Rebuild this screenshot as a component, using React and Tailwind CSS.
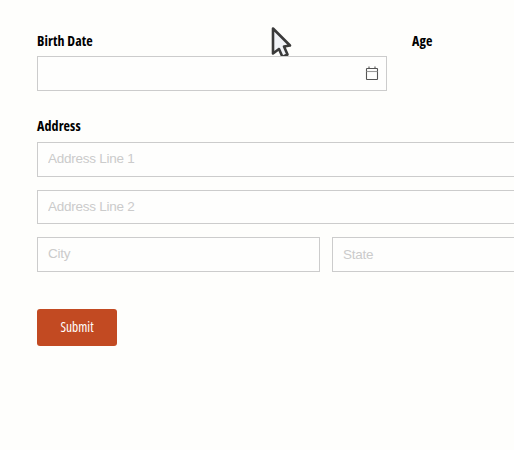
import React from "react";

const inputCls = "block w-full h-[35px] border border-[#cccccc] bg-[#fefefd] px-[10px] pb-[2px] text-[13.5px] tracking-[-0.25px] text-[#333] outline-none placeholder:text-[#cbcbcb] [font-family:'Liberation_Sans',sans-serif]";
const labelCls = "block text-[14px] leading-[19px] tracking-[0.1px] font-bold font-stretch-condensed text-black [font-family:'Open_Sans',sans-serif]";

function Cursor() {
  return (
    <svg className="absolute left-[270px] top-[26px]" width="22" height="33" viewBox="0 0 22 33" fill="none">
      <path d="M3 2.5 L20 19.5 L14 20.5 L17.5 28.5 L12.5 31 L9 23 L3 27.5 Z" fill="#f1f3f7" stroke="#3a3a3a" strokeWidth="2.6" strokeLinejoin="round" />
    </svg>
  );
}

function CalendarIcon() {
  return (
    <svg className="absolute right-[8px] top-[10px]" width="14" height="15" viewBox="0 0 14 15" fill="none" stroke="#555" strokeWidth="1.1">
      <rect x="1.5" y="2.5" width="11" height="11" rx="0.5" />
      <path d="M1.5 5.5 H12.5" stroke="#999" />
      <path d="M4 0.5 V3 M10 0.5 V3" />
    </svg>
  );
}

export default function App() {
  return (
    <div className="relative h-[450px] w-[514px] overflow-hidden bg-[#fefefc]">
      <Cursor />
      <form className="w-[615px] pl-[37px] pt-[31px]">
        <div className="flex gap-[25px]">
          <div className="w-[350px] shrink-0">
            <label className={labelCls}>Birth Date</label>
            <div className="relative mt-[6px]">
              <input className={inputCls} />
              <CalendarIcon />
            </div>
          </div>
          <label className={labelCls}>Age</label>
        </div>

        <div className="mt-[25px]">
          <label className={labelCls}>Address</label>
          <div className="mt-[7px] flex flex-col gap-[13px]">
            <input className={inputCls} placeholder="Address Line 1" />
            <input className={`${inputCls} !h-[34px]`} placeholder="Address Line 2" />
            <div className="flex gap-[12px]">
              <input className={inputCls} placeholder="City" />
              <input className={`${inputCls} !pb-0`} placeholder="State" />
            </div>
          </div>
        </div>

        <button type="button" className="mt-[37px] block h-[37px] w-[80px] rounded-[3px] bg-[#c24a22] text-[13.5px] font-normal font-stretch-condensed text-white [font-family:'Open_Sans',sans-serif]">
          Submit
        </button>
      </form>
    </div>
  );
}
